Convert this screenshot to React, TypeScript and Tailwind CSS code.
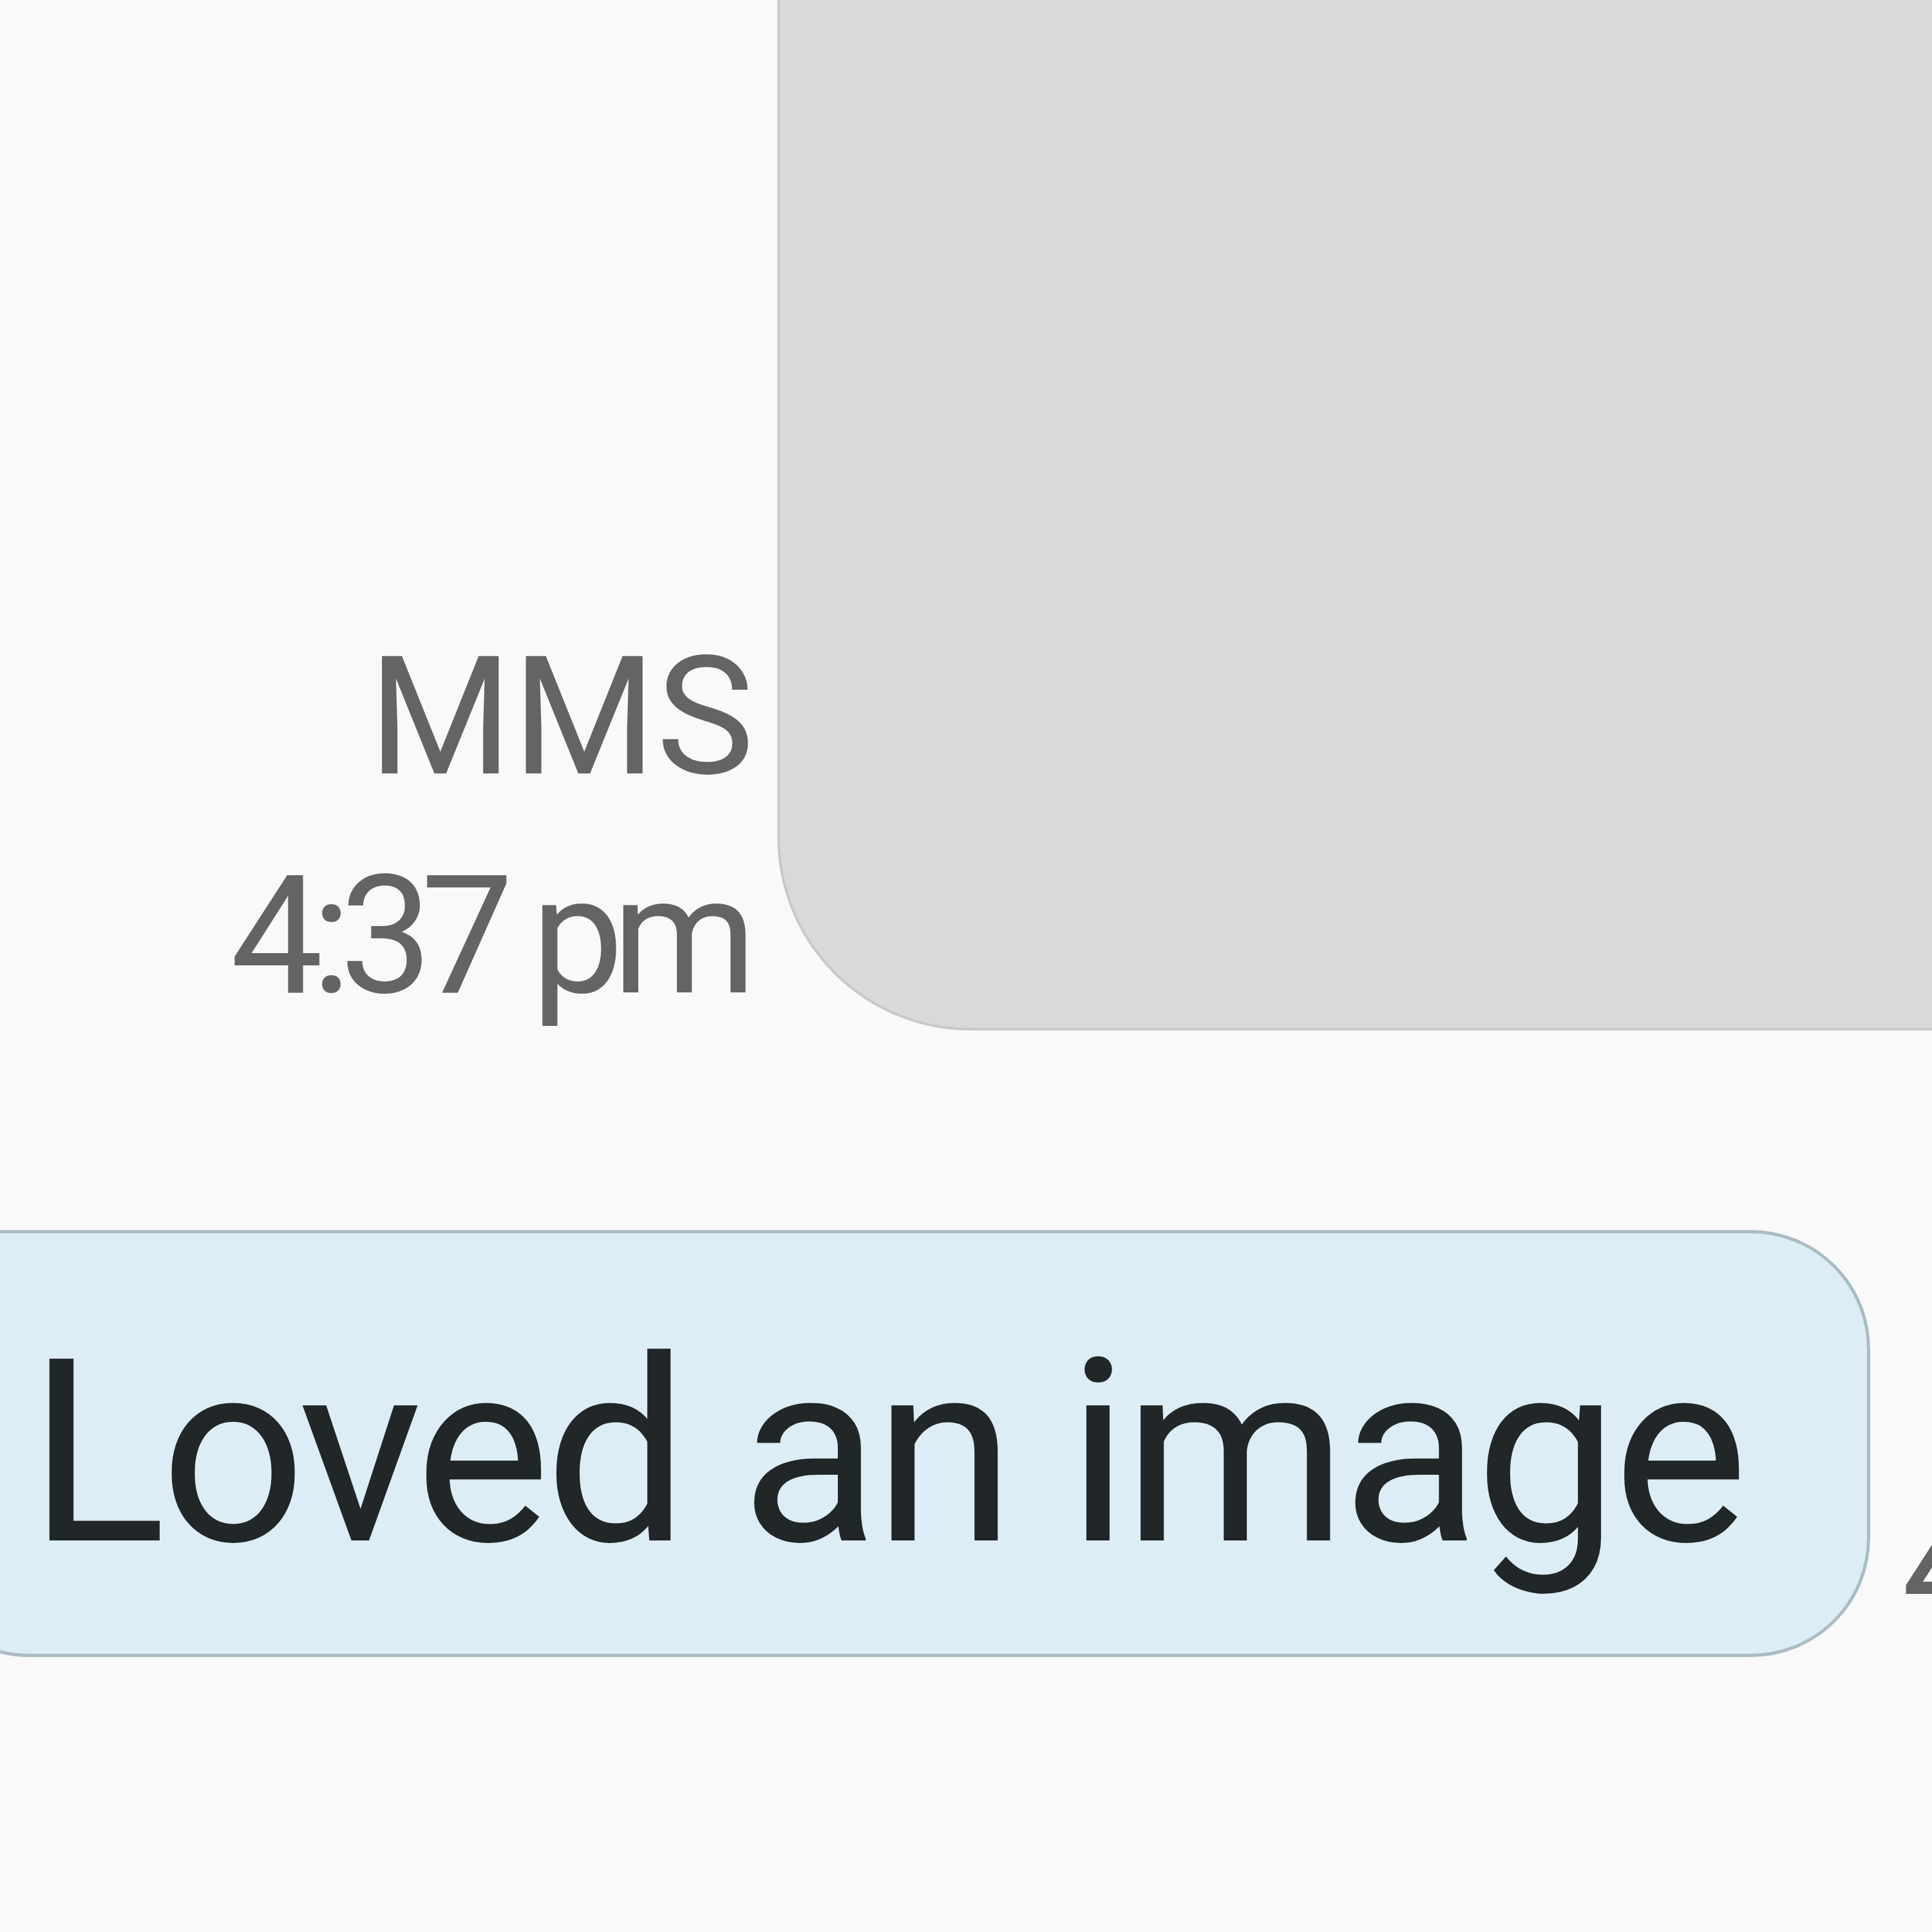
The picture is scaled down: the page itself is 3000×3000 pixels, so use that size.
export default function App() {
  return (
    <div className="w-[3000px] h-[3000px] overflow-hidden bg-[#f9f9f9] font-['Roboto',sans-serif]">
      {/* image message with meta on the left */}
      <div className="flex items-end -mt-[400px]">
        <div className="w-[1171px] shrink-0 text-right text-[256px] leading-[340px] text-[#646464] -mb-[24px]">
          <div>MMS</div>
          <div className="tracking-[-18px] pr-[14px] whitespace-nowrap">4:37 pm</div>
        </div>
        <div className="ml-[36px] w-[2400px] h-[2000px] shrink-0 rounded-[300px] border-[4px] border-[#c8c8c8] bg-[#d9d9d9]" />
      </div>

      {/* received reaction bubble */}
      <div className="flex items-end mt-[310px]">
        <div className="-ml-[140px] w-[3044px] h-[663px] shrink-0 rounded-tl-[20px] rounded-bl-[185px] rounded-r-[185px] border-[5px] border-[#aabcc3] bg-[#dcedf5] pl-[179px] pt-[109px]">
          <span className="text-[397px] leading-[465px] tracking-[-9px] text-[#212628] whitespace-nowrap">Loved an image</span>
        </div>
        <div className="ml-[49px] shrink-0 whitespace-nowrap text-[256px] leading-[340px] tracking-[-18px] text-[#646464] -mb-[27px]">
          4:37 pm
        </div>
      </div>
    </div>
  )
}
